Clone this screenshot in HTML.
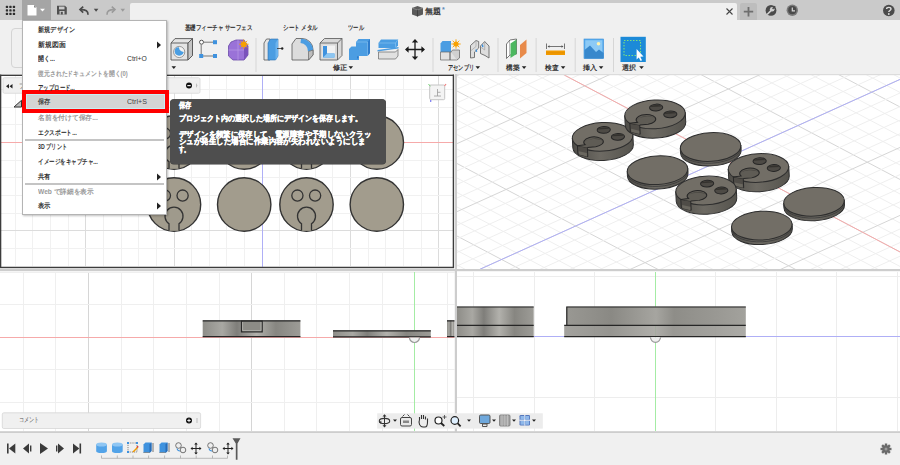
<!DOCTYPE html><html lang="ja"><head><meta charset="utf-8"><title>Fusion</title><style>
*{margin:0;padding:0;box-sizing:border-box}
html,body{width:900px;height:465px;overflow:hidden;background:#f0f0f0;font-family:"Liberation Sans",sans-serif;}
.a{position:absolute}
.t{position:absolute;white-space:nowrap;transform-origin:0 50%}
</style></head><body>
<svg class="a" style="left:0;top:0" width="900" height="465" viewBox="0 0 900 465">
<rect x="0" y="74" width="900" height="358" fill="#ffffff"/>
<clipPath id="c1"><rect x="1" y="76" width="452" height="191"/></clipPath>
<g clip-path="url(#c1)">
<line x1="15.50" y1="76" x2="15.50" y2="268" stroke="#f1f1f1" stroke-width="1"/>
<line x1="32.50" y1="76" x2="32.50" y2="268" stroke="#f1f1f1" stroke-width="1"/>
<line x1="50.50" y1="76" x2="50.50" y2="268" stroke="#f1f1f1" stroke-width="1"/>
<line x1="68.50" y1="76" x2="68.50" y2="268" stroke="#f1f1f1" stroke-width="1"/>
<line x1="85.50" y1="76" x2="85.50" y2="268" stroke="#dcdcdc" stroke-width="1"/>
<line x1="103.50" y1="76" x2="103.50" y2="268" stroke="#f1f1f1" stroke-width="1"/>
<line x1="121.50" y1="76" x2="121.50" y2="268" stroke="#f1f1f1" stroke-width="1"/>
<line x1="138.50" y1="76" x2="138.50" y2="268" stroke="#f1f1f1" stroke-width="1"/>
<line x1="156.50" y1="76" x2="156.50" y2="268" stroke="#f1f1f1" stroke-width="1"/>
<line x1="174.50" y1="76" x2="174.50" y2="268" stroke="#dcdcdc" stroke-width="1"/>
<line x1="191.50" y1="76" x2="191.50" y2="268" stroke="#f1f1f1" stroke-width="1"/>
<line x1="209.50" y1="76" x2="209.50" y2="268" stroke="#f1f1f1" stroke-width="1"/>
<line x1="226.50" y1="76" x2="226.50" y2="268" stroke="#f1f1f1" stroke-width="1"/>
<line x1="244.50" y1="76" x2="244.50" y2="268" stroke="#f1f1f1" stroke-width="1"/>
<line x1="262.50" y1="76" x2="262.50" y2="268" stroke="#dcdcdc" stroke-width="1"/>
<line x1="279.50" y1="76" x2="279.50" y2="268" stroke="#f1f1f1" stroke-width="1"/>
<line x1="297.50" y1="76" x2="297.50" y2="268" stroke="#f1f1f1" stroke-width="1"/>
<line x1="315.50" y1="76" x2="315.50" y2="268" stroke="#f1f1f1" stroke-width="1"/>
<line x1="332.50" y1="76" x2="332.50" y2="268" stroke="#f1f1f1" stroke-width="1"/>
<line x1="350.50" y1="76" x2="350.50" y2="268" stroke="#dcdcdc" stroke-width="1"/>
<line x1="368.50" y1="76" x2="368.50" y2="268" stroke="#f1f1f1" stroke-width="1"/>
<line x1="385.50" y1="76" x2="385.50" y2="268" stroke="#f1f1f1" stroke-width="1"/>
<line x1="403.50" y1="76" x2="403.50" y2="268" stroke="#f1f1f1" stroke-width="1"/>
<line x1="421.50" y1="76" x2="421.50" y2="268" stroke="#f1f1f1" stroke-width="1"/>
<line x1="438.50" y1="76" x2="438.50" y2="268" stroke="#dcdcdc" stroke-width="1"/>
<line x1="0" y1="89.50" x2="454" y2="89.50" stroke="#f1f1f1" stroke-width="1"/>
<line x1="0" y1="107.50" x2="454" y2="107.50" stroke="#f1f1f1" stroke-width="1"/>
<line x1="0" y1="124.50" x2="454" y2="124.50" stroke="#f1f1f1" stroke-width="1"/>
<line x1="0" y1="142.50" x2="454" y2="142.50" stroke="#dcdcdc" stroke-width="1"/>
<line x1="0" y1="160.50" x2="454" y2="160.50" stroke="#f1f1f1" stroke-width="1"/>
<line x1="0" y1="177.50" x2="454" y2="177.50" stroke="#f1f1f1" stroke-width="1"/>
<line x1="0" y1="195.50" x2="454" y2="195.50" stroke="#f1f1f1" stroke-width="1"/>
<line x1="0" y1="213.50" x2="454" y2="213.50" stroke="#f1f1f1" stroke-width="1"/>
<line x1="0" y1="230.50" x2="454" y2="230.50" stroke="#dcdcdc" stroke-width="1"/>
<line x1="0" y1="248.50" x2="454" y2="248.50" stroke="#f1f1f1" stroke-width="1"/>
<line x1="0" y1="266.50" x2="454" y2="266.50" stroke="#f1f1f1" stroke-width="1"/>
<line x1="0" y1="142.5" x2="454" y2="142.5" stroke="#f6aaaa" stroke-width="1"/>
<line x1="262.5" y1="76" x2="262.5" y2="268" stroke="#afaff6" stroke-width="1"/>
<circle cx="174" cy="142.5" r="26.7" fill="#a29c8d" stroke="#333" stroke-width="1.4"/><circle cx="164.9" cy="133.6" r="5.6" fill="#a29c8d" stroke="#333" stroke-width="1.3"/><circle cx="182.6" cy="133.6" r="5.6" fill="#a29c8d" stroke="#333" stroke-width="1.3"/><path d="M169 168.8 L169 161.7 A9 9 0 1 1 179 161.7 L179 168.8" fill="#9f9a8c" stroke="#333" stroke-width="1.3"/>
<circle cx="244.2" cy="142.5" r="26.7" fill="#a29c8d" stroke="#333" stroke-width="1.4"/>
<circle cx="306.5" cy="142.5" r="26.7" fill="#a29c8d" stroke="#333" stroke-width="1.4"/><circle cx="297.4" cy="133.6" r="5.6" fill="#a29c8d" stroke="#333" stroke-width="1.3"/><circle cx="315.1" cy="133.6" r="5.6" fill="#a29c8d" stroke="#333" stroke-width="1.3"/><path d="M301.5 168.8 L301.5 161.7 A9 9 0 1 1 311.5 161.7 L311.5 168.8" fill="#9f9a8c" stroke="#333" stroke-width="1.3"/>
<circle cx="376.8" cy="142.5" r="26.7" fill="#a29c8d" stroke="#333" stroke-width="1.4"/>
<circle cx="174" cy="204.5" r="26.7" fill="#a29c8d" stroke="#333" stroke-width="1.4"/><circle cx="164.9" cy="195.6" r="5.6" fill="#a29c8d" stroke="#333" stroke-width="1.3"/><circle cx="182.6" cy="195.6" r="5.6" fill="#a29c8d" stroke="#333" stroke-width="1.3"/><path d="M169 230.8 L169 223.7 A9 9 0 1 1 179 223.7 L179 230.8" fill="#9f9a8c" stroke="#333" stroke-width="1.3"/>
<circle cx="244.2" cy="204.5" r="26.7" fill="#a29c8d" stroke="#333" stroke-width="1.4"/>
<circle cx="306.5" cy="204.5" r="26.7" fill="#a29c8d" stroke="#333" stroke-width="1.4"/><circle cx="297.4" cy="195.6" r="5.6" fill="#a29c8d" stroke="#333" stroke-width="1.3"/><circle cx="315.1" cy="195.6" r="5.6" fill="#a29c8d" stroke="#333" stroke-width="1.3"/><path d="M301.5 230.8 L301.5 223.7 A9 9 0 1 1 311.5 223.7 L311.5 230.8" fill="#9f9a8c" stroke="#333" stroke-width="1.3"/>
<circle cx="376.8" cy="204.5" r="26.7" fill="#a29c8d" stroke="#333" stroke-width="1.4"/>
</g>
<defs><linearGradient id="gside" x1="0" x2="1" y1="0" y2="0"><stop offset="0" stop-color="#4f4d48"/><stop offset=".45" stop-color="#6d6a63"/><stop offset="1" stop-color="#55534d"/></linearGradient></defs>
<clipPath id="c2"><rect x="457" y="75" width="443" height="194"/></clipPath>
<g clip-path="url(#c2)">
<line x1="457" y1="-184.50" x2="900" y2="48.96" stroke="#efefef" stroke-width="1"/>
<line x1="457" y1="-170.00" x2="900" y2="63.46" stroke="#efefef" stroke-width="1"/>
<line x1="457" y1="-155.50" x2="900" y2="77.96" stroke="#efefef" stroke-width="1"/>
<line x1="457" y1="-141.00" x2="900" y2="92.46" stroke="#efefef" stroke-width="1"/>
<line x1="457" y1="-126.50" x2="900" y2="106.96" stroke="#d6d6d6" stroke-width="1"/>
<line x1="457" y1="-112.00" x2="900" y2="121.46" stroke="#efefef" stroke-width="1"/>
<line x1="457" y1="-97.50" x2="900" y2="135.96" stroke="#efefef" stroke-width="1"/>
<line x1="457" y1="-83.00" x2="900" y2="150.46" stroke="#efefef" stroke-width="1"/>
<line x1="457" y1="-68.50" x2="900" y2="164.96" stroke="#efefef" stroke-width="1"/>
<line x1="457" y1="-54.00" x2="900" y2="179.46" stroke="#d6d6d6" stroke-width="1"/>
<line x1="457" y1="-39.50" x2="900" y2="193.96" stroke="#efefef" stroke-width="1"/>
<line x1="457" y1="-25.00" x2="900" y2="208.46" stroke="#efefef" stroke-width="1"/>
<line x1="457" y1="-10.50" x2="900" y2="222.96" stroke="#efefef" stroke-width="1"/>
<line x1="457" y1="4.00" x2="900" y2="237.46" stroke="#efefef" stroke-width="1"/>
<line x1="457" y1="18.50" x2="900" y2="251.96" stroke="#d6d6d6" stroke-width="1"/>
<line x1="457" y1="33.00" x2="900" y2="266.46" stroke="#efefef" stroke-width="1"/>
<line x1="457" y1="47.50" x2="900" y2="280.96" stroke="#efefef" stroke-width="1"/>
<line x1="457" y1="62.00" x2="900" y2="295.46" stroke="#efefef" stroke-width="1"/>
<line x1="457" y1="76.50" x2="900" y2="309.96" stroke="#efefef" stroke-width="1"/>
<line x1="457" y1="91.00" x2="900" y2="324.46" stroke="#d6d6d6" stroke-width="1"/>
<line x1="457" y1="105.50" x2="900" y2="338.96" stroke="#efefef" stroke-width="1"/>
<line x1="457" y1="120.00" x2="900" y2="353.46" stroke="#efefef" stroke-width="1"/>
<line x1="457" y1="134.50" x2="900" y2="367.96" stroke="#efefef" stroke-width="1"/>
<line x1="457" y1="149.00" x2="900" y2="382.46" stroke="#efefef" stroke-width="1"/>
<line x1="457" y1="163.50" x2="900" y2="396.96" stroke="#d6d6d6" stroke-width="1"/>
<line x1="457" y1="178.00" x2="900" y2="411.46" stroke="#efefef" stroke-width="1"/>
<line x1="457" y1="192.50" x2="900" y2="425.96" stroke="#efefef" stroke-width="1"/>
<line x1="457" y1="207.00" x2="900" y2="440.46" stroke="#efefef" stroke-width="1"/>
<line x1="457" y1="221.50" x2="900" y2="454.96" stroke="#efefef" stroke-width="1"/>
<line x1="457" y1="236.00" x2="900" y2="469.46" stroke="#d6d6d6" stroke-width="1"/>
<line x1="457" y1="250.50" x2="900" y2="483.96" stroke="#efefef" stroke-width="1"/>
<line x1="457" y1="265.00" x2="900" y2="498.46" stroke="#efefef" stroke-width="1"/>
<line x1="457" y1="279.50" x2="900" y2="512.96" stroke="#efefef" stroke-width="1"/>
<line x1="457" y1="294.00" x2="900" y2="527.46" stroke="#efefef" stroke-width="1"/>
<line x1="457" y1="48.44" x2="900" y2="-151.79" stroke="#efefef" stroke-width="1"/>
<line x1="457" y1="62.04" x2="900" y2="-138.19" stroke="#efefef" stroke-width="1"/>
<line x1="457" y1="75.64" x2="900" y2="-124.59" stroke="#d6d6d6" stroke-width="1"/>
<line x1="457" y1="89.24" x2="900" y2="-110.99" stroke="#efefef" stroke-width="1"/>
<line x1="457" y1="102.84" x2="900" y2="-97.39" stroke="#efefef" stroke-width="1"/>
<line x1="457" y1="116.44" x2="900" y2="-83.79" stroke="#efefef" stroke-width="1"/>
<line x1="457" y1="130.04" x2="900" y2="-70.19" stroke="#efefef" stroke-width="1"/>
<line x1="457" y1="143.64" x2="900" y2="-56.59" stroke="#d6d6d6" stroke-width="1"/>
<line x1="457" y1="157.24" x2="900" y2="-42.99" stroke="#efefef" stroke-width="1"/>
<line x1="457" y1="170.84" x2="900" y2="-29.39" stroke="#efefef" stroke-width="1"/>
<line x1="457" y1="184.44" x2="900" y2="-15.79" stroke="#efefef" stroke-width="1"/>
<line x1="457" y1="198.04" x2="900" y2="-2.19" stroke="#efefef" stroke-width="1"/>
<line x1="457" y1="211.64" x2="900" y2="11.41" stroke="#d6d6d6" stroke-width="1"/>
<line x1="457" y1="225.24" x2="900" y2="25.01" stroke="#efefef" stroke-width="1"/>
<line x1="457" y1="238.84" x2="900" y2="38.61" stroke="#efefef" stroke-width="1"/>
<line x1="457" y1="252.44" x2="900" y2="52.21" stroke="#efefef" stroke-width="1"/>
<line x1="457" y1="266.04" x2="900" y2="65.81" stroke="#efefef" stroke-width="1"/>
<line x1="457" y1="279.64" x2="900" y2="79.41" stroke="#d6d6d6" stroke-width="1"/>
<line x1="457" y1="293.24" x2="900" y2="93.01" stroke="#efefef" stroke-width="1"/>
<line x1="457" y1="306.84" x2="900" y2="106.61" stroke="#efefef" stroke-width="1"/>
<line x1="457" y1="320.44" x2="900" y2="120.21" stroke="#efefef" stroke-width="1"/>
<line x1="457" y1="334.04" x2="900" y2="133.81" stroke="#efefef" stroke-width="1"/>
<line x1="457" y1="347.64" x2="900" y2="147.41" stroke="#d6d6d6" stroke-width="1"/>
<line x1="457" y1="361.24" x2="900" y2="161.01" stroke="#efefef" stroke-width="1"/>
<line x1="457" y1="374.84" x2="900" y2="174.61" stroke="#efefef" stroke-width="1"/>
<line x1="457" y1="388.44" x2="900" y2="188.21" stroke="#efefef" stroke-width="1"/>
<line x1="457" y1="402.04" x2="900" y2="201.81" stroke="#efefef" stroke-width="1"/>
<line x1="457" y1="415.64" x2="900" y2="215.41" stroke="#d6d6d6" stroke-width="1"/>
<line x1="457" y1="429.24" x2="900" y2="229.01" stroke="#efefef" stroke-width="1"/>
<line x1="457" y1="442.84" x2="900" y2="242.61" stroke="#efefef" stroke-width="1"/>
<line x1="457" y1="456.44" x2="900" y2="256.21" stroke="#efefef" stroke-width="1"/>
<line x1="457" y1="470.04" x2="900" y2="269.81" stroke="#efefef" stroke-width="1"/>
<line x1="457" y1="483.64" x2="900" y2="283.41" stroke="#d6d6d6" stroke-width="1"/>
<line x1="457" y1="497.24" x2="900" y2="297.01" stroke="#efefef" stroke-width="1"/>
<line x1="564.4" y1="75.1" x2="900" y2="251.96" stroke="#f6aaaa" stroke-width="1"/>
<line x1="480.1" y1="269.2" x2="900" y2="79.41" stroke="#afaff6" stroke-width="1"/>
<g transform="rotate(-3 602.6 136.8)"><path d="M572.3000000000001 136.8 L572.3000000000001 146.20000000000002 A30.3 14.3 0 0 0 632.9 146.20000000000002 L632.9 136.8 Z" fill="url(#gside)" stroke="#2e2e2e" stroke-width="1"/><ellipse cx="602.6" cy="136.8" rx="30.3" ry="14.3" fill="#726e66" stroke="#2e2e2e" stroke-width="1"/><ellipse cx="604.1" cy="130.0" rx="6.6" ry="3.4" fill="#4d4a45" stroke="#262626" stroke-width="1"/><path d="M598.3000000000001 129.2 A6 2.2 0 0 1 609.9 129.2" fill="#34322e"/><ellipse cx="617.9" cy="137.60000000000002" rx="6.6" ry="3.4" fill="#4d4a45" stroke="#262626" stroke-width="1"/><path d="M612.1 136.8 A6 2.2 0 0 1 623.6999999999999 136.8" fill="#34322e"/><path d="M577.0 144.4 L577.0 152.8 L586.8000000000001 155.8 L586.8000000000001 146.60000000000002 Z" fill="#4f4c47" stroke="#262626" stroke-width=".9"/><path d="M578.0 153.20000000000002 L586.0 155.60000000000002 L586.0 152.20000000000002 L578.0 150.00000000000003 Z" fill="#6a675f"/><path d="M577.0 144.4 L584.7 143.8 A9.8 5 0 1 1 595.2 146.3 L586.8000000000001 146.60000000000002" fill="#5f5c55" stroke="#262626" stroke-width="1"/><path d="M583.9000000000001 142.0 A9.6 4.4 0 0 1 602.8000000000001 141.6 A9.3 3.2 0 0 0 583.9000000000001 142.0 Z" fill="#3f3d39"/></g>
<g transform="rotate(-3 655 114.4)"><path d="M624.7 114.4 L624.7 123.80000000000001 A30.3 14.3 0 0 0 685.3 123.80000000000001 L685.3 114.4 Z" fill="url(#gside)" stroke="#2e2e2e" stroke-width="1"/><ellipse cx="655" cy="114.4" rx="30.3" ry="14.3" fill="#726e66" stroke="#2e2e2e" stroke-width="1"/><ellipse cx="656.5" cy="107.60000000000001" rx="6.6" ry="3.4" fill="#4d4a45" stroke="#262626" stroke-width="1"/><path d="M650.7 106.80000000000001 A6 2.2 0 0 1 662.3 106.80000000000001" fill="#34322e"/><ellipse cx="670.3" cy="115.2" rx="6.6" ry="3.4" fill="#4d4a45" stroke="#262626" stroke-width="1"/><path d="M664.5 114.4 A6 2.2 0 0 1 676.0999999999999 114.4" fill="#34322e"/><path d="M629.4 122.0 L629.4 130.4 L639.2 133.4 L639.2 124.2 Z" fill="#4f4c47" stroke="#262626" stroke-width=".9"/><path d="M630.4 130.8 L638.4 133.20000000000002 L638.4 129.8 L630.4 127.60000000000001 Z" fill="#6a675f"/><path d="M629.4 122.0 L637.1 121.4 A9.8 5 0 1 1 647.6 123.9 L639.2 124.2" fill="#5f5c55" stroke="#262626" stroke-width="1"/><path d="M636.3000000000001 119.6 A9.6 4.4 0 0 1 655.2 119.2 A9.3 3.2 0 0 0 636.3000000000001 119.6 Z" fill="#3f3d39"/></g>
<g transform="rotate(-3 710.6 147)"><path d="M680.3000000000001 147 L680.3000000000001 151.6 A30.3 14.3 0 0 0 740.9 151.6 L740.9 147 Z" fill="url(#gside)" stroke="#2e2e2e" stroke-width="1"/><path d="M680.3000000000001 148.9 A30.3 14.3 0 0 0 740.9 148.9" fill="none" stroke="#3a3a3a" stroke-width=".8"/><ellipse cx="710.6" cy="147" rx="30.3" ry="14.3" fill="#726e66" stroke="#2e2e2e" stroke-width="1"/></g>
<g transform="rotate(-3 657.5 170.2)"><path d="M627.2 170.2 L627.2 174.79999999999998 A30.3 14.3 0 0 0 687.8 174.79999999999998 L687.8 170.2 Z" fill="url(#gside)" stroke="#2e2e2e" stroke-width="1"/><path d="M627.2 172.1 A30.3 14.3 0 0 0 687.8 172.1" fill="none" stroke="#3a3a3a" stroke-width=".8"/><ellipse cx="657.5" cy="170.2" rx="30.3" ry="14.3" fill="#726e66" stroke="#2e2e2e" stroke-width="1"/></g>
<g transform="rotate(-3 758.5 168)"><path d="M728.2 168 L728.2 177.4 A30.3 14.3 0 0 0 788.8 177.4 L788.8 168 Z" fill="url(#gside)" stroke="#2e2e2e" stroke-width="1"/><ellipse cx="758.5" cy="168" rx="30.3" ry="14.3" fill="#726e66" stroke="#2e2e2e" stroke-width="1"/><ellipse cx="760.0" cy="161.2" rx="6.6" ry="3.4" fill="#4d4a45" stroke="#262626" stroke-width="1"/><path d="M754.2 160.39999999999998 A6 2.2 0 0 1 765.8 160.39999999999998" fill="#34322e"/><ellipse cx="773.8" cy="168.8" rx="6.6" ry="3.4" fill="#4d4a45" stroke="#262626" stroke-width="1"/><path d="M768.0 168.0 A6 2.2 0 0 1 779.5999999999999 168.0" fill="#34322e"/><path d="M732.9 175.6 L732.9 184.0 L742.7 187.0 L742.7 177.8 Z" fill="#4f4c47" stroke="#262626" stroke-width=".9"/><path d="M733.9 184.4 L741.9 186.8 L741.9 183.4 L733.9 181.20000000000002 Z" fill="#6a675f"/><path d="M732.9 175.6 L740.6 175.0 A9.8 5 0 1 1 751.1 177.5 L742.7 177.8" fill="#5f5c55" stroke="#262626" stroke-width="1"/><path d="M739.8000000000001 173.2 A9.6 4.4 0 0 1 758.7 172.79999999999998 A9.3 3.2 0 0 0 739.8000000000001 173.2 Z" fill="#3f3d39"/></g>
<g transform="rotate(-3 706 190.5)"><path d="M675.7 190.5 L675.7 199.9 A30.3 14.3 0 0 0 736.3 199.9 L736.3 190.5 Z" fill="url(#gside)" stroke="#2e2e2e" stroke-width="1"/><ellipse cx="706" cy="190.5" rx="30.3" ry="14.3" fill="#726e66" stroke="#2e2e2e" stroke-width="1"/><ellipse cx="707.5" cy="183.7" rx="6.6" ry="3.4" fill="#4d4a45" stroke="#262626" stroke-width="1"/><path d="M701.7 182.89999999999998 A6 2.2 0 0 1 713.3 182.89999999999998" fill="#34322e"/><ellipse cx="721.3" cy="191.3" rx="6.6" ry="3.4" fill="#4d4a45" stroke="#262626" stroke-width="1"/><path d="M715.5 190.5 A6 2.2 0 0 1 727.0999999999999 190.5" fill="#34322e"/><path d="M680.4 198.1 L680.4 206.5 L690.2 209.5 L690.2 200.3 Z" fill="#4f4c47" stroke="#262626" stroke-width=".9"/><path d="M681.4 206.9 L689.4 209.3 L689.4 205.9 L681.4 203.70000000000002 Z" fill="#6a675f"/><path d="M680.4 198.1 L688.1 197.5 A9.8 5 0 1 1 698.6 200.0 L690.2 200.3" fill="#5f5c55" stroke="#262626" stroke-width="1"/><path d="M687.3000000000001 195.7 A9.6 4.4 0 0 1 706.2 195.29999999999998 A9.3 3.2 0 0 0 687.3000000000001 195.7 Z" fill="#3f3d39"/></g>
<g transform="rotate(-3 814 201.8)"><path d="M783.7 201.8 L783.7 206.4 A30.3 14.3 0 0 0 844.3 206.4 L844.3 201.8 Z" fill="url(#gside)" stroke="#2e2e2e" stroke-width="1"/><path d="M783.7 203.70000000000002 A30.3 14.3 0 0 0 844.3 203.70000000000002" fill="none" stroke="#3a3a3a" stroke-width=".8"/><ellipse cx="814" cy="201.8" rx="30.3" ry="14.3" fill="#726e66" stroke="#2e2e2e" stroke-width="1"/></g>
<g transform="rotate(-3 761.8 225.6)"><path d="M731.5 225.6 L731.5 230.2 A30.3 14.3 0 0 0 792.0999999999999 230.2 L792.0999999999999 225.6 Z" fill="url(#gside)" stroke="#2e2e2e" stroke-width="1"/><path d="M731.5 227.5 A30.3 14.3 0 0 0 792.0999999999999 227.5" fill="none" stroke="#3a3a3a" stroke-width=".8"/><ellipse cx="761.8" cy="225.6" rx="30.3" ry="14.3" fill="#726e66" stroke="#2e2e2e" stroke-width="1"/></g>
</g>
<clipPath id="c3"><rect x="0" y="271" width="454.5" height="160"/></clipPath>
<g clip-path="url(#c3)">
<line x1="23.50" y1="272" x2="23.50" y2="432" stroke="#efefef" stroke-width="1"/>
<line x1="55.50" y1="272" x2="55.50" y2="432" stroke="#efefef" stroke-width="1"/>
<line x1="88.50" y1="272" x2="88.50" y2="432" stroke="#d6d6d6" stroke-width="1"/>
<line x1="121.50" y1="272" x2="121.50" y2="432" stroke="#efefef" stroke-width="1"/>
<line x1="153.50" y1="272" x2="153.50" y2="432" stroke="#efefef" stroke-width="1"/>
<line x1="186.50" y1="272" x2="186.50" y2="432" stroke="#efefef" stroke-width="1"/>
<line x1="219.50" y1="272" x2="219.50" y2="432" stroke="#efefef" stroke-width="1"/>
<line x1="251.50" y1="272" x2="251.50" y2="432" stroke="#d6d6d6" stroke-width="1"/>
<line x1="284.50" y1="272" x2="284.50" y2="432" stroke="#efefef" stroke-width="1"/>
<line x1="316.50" y1="272" x2="316.50" y2="432" stroke="#efefef" stroke-width="1"/>
<line x1="349.50" y1="272" x2="349.50" y2="432" stroke="#efefef" stroke-width="1"/>
<line x1="382.50" y1="272" x2="382.50" y2="432" stroke="#efefef" stroke-width="1"/>
<line x1="414.50" y1="272" x2="414.50" y2="432" stroke="#d6d6d6" stroke-width="1"/>
<line x1="447.50" y1="272" x2="447.50" y2="432" stroke="#efefef" stroke-width="1"/>
<line x1="0" y1="272.50" x2="455" y2="272.50" stroke="#efefef" stroke-width="1"/>
<line x1="0" y1="304.50" x2="455" y2="304.50" stroke="#efefef" stroke-width="1"/>
<line x1="0" y1="337.50" x2="455" y2="337.50" stroke="#d6d6d6" stroke-width="1"/>
<line x1="0" y1="369.50" x2="455" y2="369.50" stroke="#efefef" stroke-width="1"/>
<line x1="0" y1="402.50" x2="455" y2="402.50" stroke="#efefef" stroke-width="1"/>
<line x1="0" y1="337.5" x2="455" y2="337.5" stroke="#f6aaaa" stroke-width="1"/>
<line x1="414.5" y1="272" x2="414.5" y2="432" stroke="#a4eca4" stroke-width="1"/>
<defs><linearGradient id="gb" x1="0" x2="1" y1="0" y2="0"><stop offset="0" stop-color="#8e8d88"/><stop offset=".2" stop-color="#a9a8a3"/><stop offset=".35" stop-color="#7f7e7a"/><stop offset=".55" stop-color="#b2b1ac"/><stop offset=".75" stop-color="#878681"/><stop offset="1" stop-color="#9d9c97"/></linearGradient><linearGradient id="gb2" x1="0" x2="1" y1="0" y2="0"><stop offset="0" stop-color="#999893"/><stop offset=".25" stop-color="#8a8984"/><stop offset=".5" stop-color="#a6a5a0"/><stop offset=".6" stop-color="#8e8d88"/><stop offset=".85" stop-color="#9a9994"/><stop offset="1" stop-color="#a3a29d"/></linearGradient></defs>
<rect x="202.7" y="320.4" width="97.7" height="16.6" fill="url(#gb)"/>
<path d="M241.5 321 V331.8 H262.2 V321 Z" fill="#8c8b86" stroke="#2a2a2a" stroke-width="1.2"/>
<path d="M242.6 322 V330.6 H261 V322" fill="none" stroke="#b8b7b2" stroke-width=".8"/>
<path d="M202.7 320.8 H300.4 M202.7 336.6 H300.4" stroke="#262626" stroke-width="1.3"/>
<rect x="333" y="330.3" width="97.8" height="6.9" fill="url(#gb)"/>
<path d="M333 330.8 H430.8 M333 336.8 H430.8" stroke="#262626" stroke-width="1.2"/>
<path d="M409.5 337.5 A5 5 0 0 0 419.5 337.5" fill="#f0f0f0" stroke="#999" stroke-width="1.2"/>
<rect x="447" y="320.3" width="10" height="16.7" fill="url(#gb)"/>
<path d="M447 320.8 H457 M447 336.7 H457" stroke="#262626" stroke-width="1.2"/>
</g>
<clipPath id="c4"><rect x="457" y="271" width="443" height="160"/></clipPath>
<g clip-path="url(#c4)">
<line x1="473.50" y1="272" x2="473.50" y2="432" stroke="#ededed" stroke-width="1"/>
<line x1="534.50" y1="272" x2="534.50" y2="432" stroke="#ededed" stroke-width="1"/>
<line x1="594.50" y1="272" x2="594.50" y2="432" stroke="#ededed" stroke-width="1"/>
<line x1="655.50" y1="272" x2="655.50" y2="432" stroke="#ededed" stroke-width="1"/>
<line x1="715.50" y1="272" x2="715.50" y2="432" stroke="#ededed" stroke-width="1"/>
<line x1="776.50" y1="272" x2="776.50" y2="432" stroke="#ededed" stroke-width="1"/>
<line x1="836.50" y1="272" x2="836.50" y2="432" stroke="#ededed" stroke-width="1"/>
<line x1="897.50" y1="272" x2="897.50" y2="432" stroke="#ededed" stroke-width="1"/>
<line x1="457" y1="276.50" x2="900" y2="276.50" stroke="#ededed" stroke-width="1"/>
<line x1="457" y1="336.50" x2="900" y2="336.50" stroke="#ededed" stroke-width="1"/>
<line x1="457" y1="397.50" x2="900" y2="397.50" stroke="#ededed" stroke-width="1"/>
<line x1="457" y1="336.5" x2="900" y2="336.5" stroke="#afaff6" stroke-width="1"/>
<line x1="655.5" y1="272" x2="655.5" y2="432" stroke="#a4eca4" stroke-width="1"/>
<rect x="457" y="306.6" width="76.7" height="30.4" fill="url(#gb)"/>
<path d="M457 307 H533.7 M457 325.4 H533.7 M457 336.7 H533.7" stroke="#262626" stroke-width="1.2"/>
<rect x="566.4" y="306.6" width="179.4" height="18.8" fill="url(#gb2)"/>
<rect x="564.2" y="325.4" width="181.6" height="11.6" fill="url(#gb2)" opacity=".9"/>
<path d="M566.4 307 H745.8 M564.2 325.4 H745.8 M564.2 336.7 H745.8 M566.8 306.6 V325.4" stroke="#262626" stroke-width="1.2"/>
<path d="M650.5 337.3 A5 5 0 0 0 660.5 337.3" fill="#f0f0f0" stroke="#999" stroke-width="1.2"/>
</g>
<rect x="0" y="74.6" width="454" height="1.4" fill="#3c3c3c"/>
<rect x="0" y="74.6" width="1.3" height="193.4" fill="#3c3c3c"/>
<rect x="452.7" y="74.6" width="1.4" height="193.4" fill="#3c3c3c"/>
<rect x="0" y="266.8" width="454" height="1.4" fill="#3c3c3c"/>
<rect x="454.8" y="74" width="2.2" height="358" fill="#cdcdcd"/>
<rect x="0" y="269" width="900" height="2.2" fill="#cdcdcd"/>
<rect x="457" y="74" width="443" height="1.2" fill="#dcdcdc"/>
<rect x="0" y="431.2" width="900" height="2" fill="#cdcdcd"/>
<rect x="3" y="77.7" width="197" height="15.6" rx="1.5" fill="#f0f0f0" stroke="#d8d8d8" stroke-width=".8"/>
<path d="M6 86.2 L9 84 V88.4 Z M9.5 86.2 L12.5 84 V88.4 Z" fill="#222"/>
<circle cx="189" cy="85.6" r="3" fill="#111"/><rect x="187.3" y="85" width="3.4" height="1.2" fill="#eee"/>
<path d="M196 83 L197.5 85.5 L196 88 Z" fill="#bbb"/>
<path d="M14 107 L21.5 100.3 V107 Z" fill="#bdbdbd" stroke="#333" stroke-width="1"/>
<rect x="429.7" y="85" width="15" height="14.7" rx="1.2" fill="#f4f4f4" stroke="#c4c4c4" stroke-width="1"/>
<path d="M434 96 H441 M437.5 89 V96 M437.5 92.3 H440.5" stroke="#999" stroke-width=".8"/>
<path d="M428.5 84 L430.3 86.3" stroke="#7ad07a" stroke-width="1"/><path d="M446 84 L444.5 86" stroke="#f08080" stroke-width="1.2"/><path d="M430.7 100 V102" stroke="#7a7af0" stroke-width="1.2"/>
<rect x="2.3" y="412.8" width="198.3" height="15.7" rx="1.5" fill="#f0f0f0" stroke="#d6d6d6" stroke-width=".8"/>
<circle cx="189" cy="420.5" r="3" fill="#111"/><path d="M187.3 420.5 H190.7 M189 418.8 V422.2" stroke="#eee" stroke-width="1"/>
<path d="M197 418 V423" stroke="#bbb" stroke-width="1"/>
<rect x="377.2" y="413.3" width="165.6" height="15.3" fill="#ececec"/>
<ellipse cx="384.5" cy="421" rx="5.2" ry="2.6" fill="none" stroke="#333" stroke-width="1.1"/>
<path d="M384.5 415 V427" stroke="#333" stroke-width="1"/><path d="M384.5 414.2 L382.5 416.6 H386.5 Z M384.5 427.6 L382.5 425.2 H386.5 Z M379 422.5 L381.3 420.8 V424 Z" fill="#333"/>
<path d="M393 419.5 H397 L395 421.8 Z" fill="#222"/>
<rect x="400.5" y="417.5" width="11" height="8.5" rx="1.5" fill="#e8e8e8" stroke="#444" stroke-width="1"/>
<path d="M402.5 416.5 L404.5 414.5 M409.5 416.5 L407.5 414.5" stroke="#444" stroke-width="1"/><rect x="403" y="420.5" width="6" height="2.5" fill="#888"/>
<path d="M419.5 420 V417 M421.5 419 V415 M423.5 419 V415 M425.5 419.5 V416.5 M419.5 420 C418 423 420 427 423 427 H425 C427 427 427.5 424 427.5 422 V418.5" fill="none" stroke="#333" stroke-width="1.1"/>
<circle cx="438.5" cy="420.5" r="3.5" fill="#fff" stroke="#222" stroke-width="1.2"/><path d="M441 423 L444.3 426" stroke="#222" stroke-width="1.8"/>
<path d="M444.5 415 V419 M442.5 417 H446.5" stroke="#444" stroke-width=".8"/>
<circle cx="454.8" cy="420.5" r="3.8" fill="#dff0ff" stroke="#222" stroke-width="1.2"/><path d="M457.5 423.2 L460.6 426.3" stroke="#222" stroke-width="1.8"/>
<path d="M467 419.5 H471 L469 421.8 Z" fill="#222"/>
<rect x="479.5" y="415" width="10.5" height="8.5" rx="1.2" fill="#6fa8dc" stroke="#555" stroke-width="1"/><path d="M482.5 424 H487 V426.5 H482.5 Z" fill="none" stroke="#555" stroke-width="1"/>
<path d="M492 419.5 H496 L494 421.8 Z" fill="#222"/>
<rect x="499.5" y="415" width="10.5" height="11" rx="1" fill="#a8a8a8" stroke="#777" stroke-width=".8"/><path d="M502 415 V426 M504.8 415 V426 M507.5 415 V426" stroke="#cfcfcf" stroke-width=".6"/>
<path d="M512 419.5 H516 L514 421.8 Z" fill="#222"/>
<rect x="519.5" y="415" width="10.5" height="10.5" rx="1.3" fill="#5577bb"/><path d="M519.5 420.2 H530 M524.8 415 V425.5" stroke="#fff" stroke-width="1"/>
<rect x="520.5" y="416" width="3.8" height="3.7" fill="#8fb8ea"/><rect x="525.3" y="416" width="3.8" height="3.7" fill="#8fb8ea"/><rect x="520.5" y="421" width="3.8" height="3.7" fill="#8fb8ea"/><rect x="525.3" y="421" width="3.8" height="3.7" fill="#8fb8ea"/>
<path d="M532 419.5 H536 L534 421.8 Z" fill="#222"/>
</svg>
<div class="t" id="t1" style="left:18.5px;top:81.00px;font-size:7px;line-height:10px;color:#444;font-weight:normal;transform:scaleX(0.8571);">ブラウザ</div>
<div class="t" id="t2" style="left:18.6px;top:415.30px;font-size:7px;line-height:10px;color:#555;font-weight:normal;transform:scaleX(0.7321);">コメント</div>
<div class="a" style="left:0;top:0;width:900px;height:20.5px;background:#cacaca"></div>
<div class="a" style="left:22px;top:0;width:29px;height:20px;background:#a5a5a5"></div>
<div class="a" style="left:130px;top:3px;width:606.7px;height:17.5px;background:#f0f0f0;border-radius:2px 2px 0 0"></div>
<div class="a" style="left:740px;top:3px;width:17.3px;height:17.5px;background:#bdbdbd;border-radius:2px 2px 0 0"></div>
<div class="a" style="left:0;top:20px;width:900px;height:54px;background:#f0f0f0"></div>
<div class="a" style="left:10.5px;top:28.4px;width:30px;height:39.3px;border:1px solid #d4d4d4;border-radius:4px"></div>
<div class="a" style="left:0;top:433px;width:900px;height:32px;background:#f0f0f0"></div>
<svg class="a" style="left:0;top:0" width="900" height="465" viewBox="0 0 900 465">
<rect x="5.8" y="5.8" width="2.3" height="2.3" rx=".6" fill="#2e2e2e"/>
<rect x="5.8" y="9.3" width="2.3" height="2.3" rx=".6" fill="#2e2e2e"/>
<rect x="5.8" y="12.8" width="2.3" height="2.3" rx=".6" fill="#2e2e2e"/>
<rect x="9.3" y="5.8" width="2.3" height="2.3" rx=".6" fill="#2e2e2e"/>
<rect x="9.3" y="9.3" width="2.3" height="2.3" rx=".6" fill="#2e2e2e"/>
<rect x="9.3" y="12.8" width="2.3" height="2.3" rx=".6" fill="#2e2e2e"/>
<rect x="12.8" y="5.8" width="2.3" height="2.3" rx=".6" fill="#2e2e2e"/>
<rect x="12.8" y="9.3" width="2.3" height="2.3" rx=".6" fill="#2e2e2e"/>
<rect x="12.8" y="12.8" width="2.3" height="2.3" rx=".6" fill="#2e2e2e"/>
<path d="M27.5 5 H34 L36.5 7.5 V15.6 H27.5 Z" fill="#fff"/>
<path d="M34 5 V7.5 H36.5" fill="#888" />
<path d="M40 8.7 H45 L42.5 11.6 Z" fill="#fff"/>
<path d="M57 5.8 H65 L66.8 7.6 V14.5 H57 Z" fill="#505050"/>
<rect x="59" y="6.6" width="5.5" height="2.8" fill="#cacaca"/>
<rect x="59.5" y="11" width="5" height="3.5" fill="#cacaca"/>
<rect x="60.8" y="11.8" width="2" height="2.7" fill="#505050"/>
<path d="M88 14.8 C88.2 11 86 9.6 80.5 9.6" fill="none" stroke="#4a4a4a" stroke-width="1.7"/>
<path d="M83.2 6.6 L80 9.6 L83.2 12.6" fill="none" stroke="#4a4a4a" stroke-width="1.7" stroke-linejoin="miter"/>
<path d="M93.8 8.8 H98.4 L96.1 11.8 Z" fill="#4a4a4a"/>
<path d="M107 14.8 C106.8 11 109 9.6 114.5 9.6" fill="none" stroke="#9a9a9a" stroke-width="1.6"/>
<path d="M111.8 6.6 L115 9.6 L111.8 12.6" fill="none" stroke="#9a9a9a" stroke-width="1.6"/>
<path d="M120.5 8.8 H125 L122.75 11.8 Z" fill="#9a9a9a"/>
<path d="M412 8 L417.5 6 L423 8 V14.5 L417.5 16.5 L412 14.5 Z" fill="#5a5a5a"/>
<path d="M412 8 L417.5 10 L423 8" fill="none" stroke="#8a8a8a" stroke-width=".8"/>
<path d="M417.5 10 V16.5" stroke="#3a3a3a" stroke-width=".8"/>
<path d="M726.5 8.5 L732.5 14.5 M732.5 8.5 L726.5 14.5" stroke="#444" stroke-width="1.1"/>
<path d="M748.5 7 V16.5 M743.8 11.7 H753.2" stroke="#6e6e6e" stroke-width="1.8"/>
<circle cx="771" cy="10.4" r="5.4" fill="#4a4a4a"/>
<path d="M767.6 14 L771 10.6" stroke="#d0d0d0" stroke-width="1.7" stroke-linecap="round"/>
<circle cx="772.2" cy="9.3" r="2.3" fill="#d0d0d0"/>
<path d="M772.6 8.9 L775.2 6.3" stroke="#4a4a4a" stroke-width="1.5"/>
<circle cx="792.3" cy="10.2" r="5.7" fill="#7a7a7a"/><circle cx="792.3" cy="10.2" r="4.1" fill="#4a4a4a"/>
<path d="M792.3 7.6 V10.8 H795" fill="none" stroke="#d8d8d8" stroke-width="1.2"/>
<circle cx="888.8" cy="10.5" r="5.8" fill="#4a4a4a"/>
<path d="M886.6 9 C886.6 6.8 891 6.8 891 9 C891 10.5 888.8 10.5 888.8 12" fill="none" stroke="#ddd" stroke-width="1.4"/>
<circle cx="888.8" cy="14" r=".9" fill="#ddd"/>
<path d="M171 43 L175 38.6 H192.5 V55.5 L188 60 H171 Z" fill="#e4e4e4" stroke="#555" stroke-width=".9"/>
<path d="M171 43 H188 V60 M188 43 L192.5 38.6" fill="none" stroke="#555" stroke-width=".9"/>
<path d="M188 43 L192.5 38.6 V55.5 L188 60 Z" fill="#c4c4c4" stroke="#555" stroke-width=".9"/>
<circle cx="179.2" cy="52" r="5.6" fill="#f2f2f2" stroke="#999" stroke-width="1"/>
<path d="M176.5 47.5 A4.6 4.6 0 1 0 183.8 52 C181 52 179 50 179 47.3 Z" fill="#4a9ee2"/>
<path d="M204 42.2 H213 M201.2 44.5 V54 M202 56 H213" stroke="#777" stroke-width="1"/>
<circle cx="201.5" cy="42.2" r="2" fill="#fff" stroke="#555" stroke-width="1"/>
<rect x="213" y="40.2" width="4" height="4" fill="#3f92de"/>
<rect x="199.2" y="54" width="4" height="4" fill="#3f92de"/>
<rect x="213" y="54" width="4" height="4" fill="#3f92de"/>
<path d="M231 42 L236 40 H244 L248 46 V55 L244 60 H233 L228.5 56 V46 Z" fill="#9a72d8" stroke="#6a4aa8" stroke-width=".8"/>
<path d="M228.5 50 H248 M238 40 V60" stroke="#b99be6" stroke-width=".7"/>
<path d="M244 48 L248 46 V55 L244 60 Z" fill="#7a52bb"/>
<circle cx="243.8" cy="44.2" r="2.8" fill="#f7a100"/>
<path d="M243.8 39.5 V49 M239 44.2 H248.6 M240.4 40.8 L247.2 47.6 M247.2 40.8 L240.4 47.6" stroke="#f7a100" stroke-width=".9"/>
<rect x="255.5" y="38" width="1" height="34" fill="#d6d6d6"/>
<rect x="432.5" y="38" width="1" height="34" fill="#d6d6d6"/>
<rect x="497.5" y="38" width="1" height="34" fill="#d6d6d6"/>
<rect x="535.6" y="38" width="1" height="34" fill="#d6d6d6"/>
<rect x="574.7" y="38" width="1" height="34" fill="#d6d6d6"/>
<rect x="613" y="38" width="1" height="34" fill="#d6d6d6"/>
<path d="M264 43 L266.5 39 H270 V60 H264 Z" fill="#e6e6e6" stroke="#555" stroke-width=".8"/>
<path d="M268 43 L270.5 39 H278 V56 L275.5 60 H268 Z" fill="#4b9de2" stroke="#2d6fb0" stroke-width=".6"/>
<path d="M275.5 43 L278 39 V56 L275.5 60 Z" fill="#6bb3ee"/>
<path d="M277 48.5 H282" stroke="#444" stroke-width=".9"/><circle cx="282.2" cy="48.5" r="1.2" fill="#222"/>
<path d="M292 44 L296 38.5 H302 A11 11 0 0 1 313 49.5 V55 L308.5 60 H292 Z" fill="#dcdcdc" stroke="#555" stroke-width=".8"/>
<path d="M301 38.8 A11.5 11.5 0 0 1 313 50 L308 51.5 A8 8 0 0 0 300.5 43 Z" fill="#4b9de2"/>
<path d="M308.5 51.5 V60 L313 55 V50 Z" fill="#bdbdbd" stroke="#555" stroke-width=".6"/>
<path d="M320 43 L324.5 38.5 H342 V55.5 L337.5 60 H320 Z" fill="#d9d9d9" stroke="#555" stroke-width=".8"/>
<path d="M320 43 H337.5 V60 M337.5 43 L342 38.5" fill="none" stroke="#555" stroke-width=".8"/>
<rect x="322.5" y="45.5" width="12.5" height="12" fill="#f2f2f2"/>
<path d="M323 46 H327 V53.5 H334.5 V57.5 H323 Z" fill="#3f92de"/>
<path d="M327 53.5 H334.5 V57.5 H323 Z" fill="#8cc6f2"/>
<path d="M349 49 L351.5 46.5 H359 V60 H349 Z" fill="#4b9de2"/>
<path d="M356 42 L358.5 39 H370 V53 L367.5 56 H356 Z" fill="#4b9de2"/>
<path d="M367.5 42 L370 39 V53 L367.5 56 Z" fill="#2e7ccc"/>
<path d="M356 42 H367.5 V56" fill="none" stroke="#8ec8f4" stroke-width=".6"/>
<path d="M357 56 V59 L359 57 Z" fill="#2e7ccc"/>
<path d="M378.5 43 L381 39.5 H398 V45.5 L395.5 48 H378.5 Z" fill="#4b9de2"/>
<path d="M378.5 43 H395.5 V48 M395.5 43 L398 39.5" fill="none" stroke="#8ec8f4" stroke-width=".6"/>
<path d="M377.5 50 L398.5 47 V48.5 L377.5 51.5 Z" fill="#4b9de2"/>
<path d="M378.5 52 H395.5 L398 49.5 V56 L395.5 59 H378.5 Z" fill="#e0e0e0" stroke="#666" stroke-width=".7"/>
<path d="M415 41 V58 M406.5 49.5 H423.5" stroke="#1a1a1a" stroke-width="1.3"/>
<path d="M415 39 L411.8 42.6 H418.2 Z M415 60 L411.8 56.4 H418.2 Z M405 49.5 L408.6 46.3 V52.7 Z M425 49.5 L421.4 46.3 V52.7 Z" fill="#1a1a1a"/>
<path d="M440.5 43.5 L442.5 41 H451 V52 H440.5 Z" fill="#4b9de2"/>
<path d="M440.5 52 H450 V60 H440.5 Z M450 52 H459 V58 L457 60 H450 Z" fill="#e2e2e2" stroke="#666" stroke-width=".7"/>
<path d="M451 52 L452.5 50 H459.5 V58 L457 60" fill="#d0d0d0" stroke="#666" stroke-width=".7"/>
<circle cx="456" cy="44" r="2.6" fill="#f7a100"/>
<path d="M456 39.3 V48.7 M451.3 44 H460.7 M452.7 40.7 L459.3 47.3 M459.3 40.7 L452.7 47.3" stroke="#f7a100" stroke-width=".9"/>
<path d="M470.5 45.5 L476 40.5 L478.7 41.5 V48 L474.5 52 V57.5 L470.5 58 Z" fill="#dedede" stroke="#6a6a6a" stroke-width=".9" stroke-linejoin="round"/>
<path d="M476 40.5 V46.5 L470.5 51" fill="none" stroke="#9a9a9a" stroke-width=".6"/>
<path d="M480.5 46 L484.7 41.5 L489 46 V58 L485 55.5 L480.5 53.5 Z" fill="#dedede" stroke="#6a6a6a" stroke-width=".9" stroke-linejoin="round"/>
<path d="M484.7 41.5 V50 L480.5 47" fill="none" stroke="#9a9a9a" stroke-width=".6"/>
<path d="M476.2 49.5 L476.6 51.8 M482.4 44.5 L482.8 47.2" stroke="#3f92de" stroke-width="1.4"/>
<path d="M506.5 44 L510 40 V55 L506.5 58.5 Z" fill="#fff" stroke="#555" stroke-width=".8"/>
<path d="M510 40 L516.5 39 V54 L510 55" fill="#fff" stroke="#555" stroke-width=".8"/>
<path d="M510.5 43.5 L516.5 39.5 V54 L510.5 58 Z" fill="#4cb860"/>
<path d="M520 45 L526.5 39.5 V53 L520 58.5 Z" fill="#e88a4a"/>
<path d="M546.5 43.5 V49 M564.5 43.5 V49" stroke="#555" stroke-width=".8"/>
<path d="M548 46.5 H563" stroke="#555" stroke-width=".8"/>
<path d="M547.5 46.5 L549.5 45.2 V47.8 Z M563.5 46.5 L561.5 45.2 V47.8 Z" fill="#555"/>
<rect x="546" y="50.5" width="19" height="4.5" fill="#f29a00"/>
<path d="M546.5 52.8 H565" stroke="#c57800" stroke-width=".6" stroke-dasharray="1 1"/>
<rect x="584" y="39" width="19.6" height="19.4" fill="#5aaef0" stroke="#3a8ed8" stroke-width=".6"/>
<rect x="585.3" y="40.3" width="17" height="16.8" fill="#8ccaf6"/>
<path d="M584.5 58.4 V50 L590 45.5 L596 52 L599 49.5 L603.6 53 V58.4 Z" fill="#3888cc"/>
<circle cx="598.5" cy="43.8" r="1.8" fill="#fff3b0"/>
<rect x="620.5" y="36.8" width="25.3" height="25.2" fill="#1c8ad8"/>
<rect x="624" y="40.5" width="16.5" height="15" fill="none" stroke="#7ee07e" stroke-width="1.1" stroke-dasharray="1.5 1.5"/>
<path d="M636.6 49 V59.5 L638.8 57.4 L640.6 61 L642 60.3 L640.3 56.8 L643.5 56.6 Z" fill="#fff"/>
<path d="M171.5 66.3 H176.1 L173.8 69 Z" fill="#222"/>
<path d="M348.5 66.3 H353.1 L350.8 69 Z" fill="#222"/>
<path d="M475.5 66.3 H480.1 L477.8 69 Z" fill="#222"/>
<path d="M521.8 66.3 H526.4 L524.0999999999999 69 Z" fill="#222"/>
<path d="M560.8 66.3 H565.4 L563.0999999999999 69 Z" fill="#222"/>
<path d="M598.8 66.3 H603.4 L601.0999999999999 69 Z" fill="#222"/>
<path d="M639.2 66.3 H643.8000000000001 L641.5 69 Z" fill="#222"/>
<rect x="7" y="443.5" width="1.6" height="10" fill="#3a3a3a"/><path d="M15.3 443.5 V453.5 L9 448.5 Z" fill="#3a3a3a"/>
<path d="M29 443.5 V453.5 L23 448.5 Z" fill="#3a3a3a"/><rect x="30" y="445.5" width="1.4" height="6" fill="#3a3a3a"/>
<path d="M40 443 V454 L48 448.5 Z" fill="#3a3a3a"/>
<rect x="56" y="445.5" width="1.4" height="6" fill="#3a3a3a"/><path d="M58 443.5 V453.5 L64 448.5 Z" fill="#3a3a3a"/>
<path d="M73 443.5 V453.5 L79.3 448.5 Z" fill="#3a3a3a"/><rect x="79.5" y="443.5" width="1.6" height="10" fill="#3a3a3a"/>
<path d="M96.2 444.5 V451 A5.35 2 0 0 0 106.9 451 V444.5 Z" fill="#52a3e8"/><ellipse cx="101.55" cy="444.5" rx="5.35" ry="2" fill="#8fc6f3"/>
<path d="M112 444.5 V451 A5.35 2 0 0 0 122.7 451 V444.5 Z" fill="#52a3e8"/><ellipse cx="117.35" cy="444.5" rx="5.35" ry="2" fill="#8fc6f3"/>
<rect x="128" y="443" width="9" height="9" fill="none" stroke="#555" stroke-width=".7" stroke-dasharray="1.2 1"/>
<rect x="127" y="442" width="2" height="2" fill="#3f92de"/><rect x="136" y="442" width="2" height="2" fill="#3f92de"/><rect x="127" y="451" width="2" height="2" fill="#3f92de"/>
<path d="M133 452 L137.5 447.5" stroke="#f29a00" stroke-width="1.5"/><circle cx="137.6" cy="446.8" r=".9" fill="#e03030"/>
<path d="M143.5 444.5 L145.5 442.5 H151.5 V451 L149.5 453 H143.5 Z" fill="#3f92de"/><path d="M149.5 444.5 L151.5 442.5 V451 L149.5 453 Z" fill="#2a6cb6"/>
<path d="M153.0 443 V452" stroke="#555" stroke-width=".8"/><path d="M143.5 452.5 H149.5" stroke="#888" stroke-width=".8"/>
<path d="M159.5 444.5 L161.5 442.5 H167.5 V451 L165.5 453 H159.5 Z" fill="#3f92de"/><path d="M165.5 444.5 L167.5 442.5 V451 L165.5 453 Z" fill="#2a6cb6"/>
<path d="M169.0 443 V452" stroke="#555" stroke-width=".8"/><path d="M159.5 452.5 H165.5" stroke="#888" stroke-width=".8"/>
<circle cx="178.5" cy="445.5" r="2.8" fill="#eee" stroke="#555" stroke-width=".8"/><circle cx="183.0" cy="450" r="2.8" fill="#eee" stroke="#555" stroke-width=".8"/>
<path d="M177.0 448.5 Q177.5 451 180.0 451" fill="none" stroke="#3f92de" stroke-width="1.1"/>
<circle cx="210.5" cy="445.5" r="2.8" fill="#eee" stroke="#555" stroke-width=".8"/><circle cx="215.0" cy="450" r="2.8" fill="#eee" stroke="#555" stroke-width=".8"/>
<path d="M209.0 448.5 Q209.5 451 212.0 451" fill="none" stroke="#3f92de" stroke-width="1.1"/>
<path d="M196 443.5 V453.5 M191 448.5 H201" stroke="#222" stroke-width="1"/><path d="M196 442.5 L194.2 444.6 H197.8 Z M196 454.5 L194.2 452.4 H197.8 Z M190.5 448.5 L192.6 446.7 V450.3 Z M201.5 448.5 L199.4 446.7 V450.3 Z" fill="#222"/>
<path d="M228 443.5 V453.5 M223 448.5 H233" stroke="#222" stroke-width="1"/><path d="M228 442.5 L226.2 444.6 H229.8 Z M228 454.5 L226.2 452.4 H229.8 Z M222.5 448.5 L224.6 446.7 V450.3 Z M233.5 448.5 L231.4 446.7 V450.3 Z" fill="#222"/>
<path d="M232.5 438.3 H240.5 L237.5 443.5 V459.8 H235.8 V443.5 Z" fill="#5a5a5a"/>
<path d="M101.5 455.5 V458.3 H227.5 V455.5" fill="none" stroke="#aaa" stroke-width=".8"/>
<path d="M117.3 455.5 V458.3" stroke="#aaa" stroke-width=".8"/>
<path d="M133 455.5 V458.3" stroke="#aaa" stroke-width=".8"/>
<path d="M148.6 455.5 V458.3" stroke="#aaa" stroke-width=".8"/>
<path d="M164.6 455.5 V458.3" stroke="#aaa" stroke-width=".8"/>
<path d="M180.5 455.5 V458.3" stroke="#aaa" stroke-width=".8"/>
<path d="M196.2 455.5 V458.3" stroke="#aaa" stroke-width=".8"/>
<path d="M212.5 455.5 V458.3" stroke="#aaa" stroke-width=".8"/>
<g transform="translate(886 449)">
<rect x="-1.2" y="-5.5" width="2.4" height="3" fill="#6a6a6a" transform="rotate(0)"/>
<rect x="-1.2" y="-5.5" width="2.4" height="3" fill="#6a6a6a" transform="rotate(45)"/>
<rect x="-1.2" y="-5.5" width="2.4" height="3" fill="#6a6a6a" transform="rotate(90)"/>
<rect x="-1.2" y="-5.5" width="2.4" height="3" fill="#6a6a6a" transform="rotate(135)"/>
<rect x="-1.2" y="-5.5" width="2.4" height="3" fill="#6a6a6a" transform="rotate(180)"/>
<rect x="-1.2" y="-5.5" width="2.4" height="3" fill="#6a6a6a" transform="rotate(225)"/>
<rect x="-1.2" y="-5.5" width="2.4" height="3" fill="#6a6a6a" transform="rotate(270)"/>
<rect x="-1.2" y="-5.5" width="2.4" height="3" fill="#6a6a6a" transform="rotate(315)"/>
<circle r="3.8" fill="#6a6a6a"/><circle r="1.5" fill="#9a9a9a"/></g>
</svg>
<div class="t" id="t3" style="left:425px;top:7.30px;font-size:8px;line-height:10px;color:#333;font-weight:bold;transform:scaleX(1.0000);">無題</div>
<div class="t" id="t4" style="left:442px;top:5.00px;font-size:7px;line-height:10px;color:#5a8ab8;font-weight:bold;transform:scaleX(1.0000);">*</div>
<div class="t" id="t5" style="left:185.3px;top:22.70px;font-size:7px;line-height:10px;color:#333;font-weight:bold;transform:scaleX(0.7849);">基礎フィーチャ サーフェス</div>
<div class="t" id="t6" style="left:283.4px;top:22.70px;font-size:7px;line-height:10px;color:#333;font-weight:bold;transform:scaleX(0.7909);">シート メタル</div>
<div class="t" id="t7" style="left:347.7px;top:22.70px;font-size:7px;line-height:10px;color:#333;font-weight:bold;transform:scaleX(0.7524);">ツール</div>
<div class="t" id="t8" style="left:332.5px;top:62.70px;font-size:7px;line-height:10px;color:#333;font-weight:bold;transform:scaleX(1.0357);">修正</div>
<div class="t" id="t9" style="left:448px;top:62.70px;font-size:7px;line-height:10px;color:#333;font-weight:bold;transform:scaleX(0.7429);">アセンブリ</div>
<div class="t" id="t10" style="left:505.6px;top:62.70px;font-size:7px;line-height:10px;color:#333;font-weight:bold;transform:scaleX(0.9571);">構築</div>
<div class="t" id="t11" style="left:544.5px;top:62.70px;font-size:7px;line-height:10px;color:#333;font-weight:bold;transform:scaleX(0.9643);">検査</div>
<div class="t" id="t12" style="left:583px;top:62.70px;font-size:7px;line-height:10px;color:#333;font-weight:bold;transform:scaleX(1.0000);">挿入</div>
<div class="t" id="t13" style="left:622.4px;top:62.70px;font-size:7px;line-height:10px;color:#333;font-weight:bold;transform:scaleX(1.0071);">選択</div>
<div class="a" style="left:22px;top:20px;width:145px;height:195px;background:#fff;border:1px solid #b4b4b4;box-shadow:1px 1px 2px rgba(0,0,0,.25)"></div>
<div class="a" style="left:22px;top:90.3px;width:146.8px;height:23.1px;border:4px solid #ff0000;background:#d4d4d4"></div>
<div class="a" style="left:26px;top:94.3px;width:138.8px;height:15.1px;border:1px solid #c8eef4"></div>
<div class="t" id="t14" style="left:38px;top:25.00px;font-size:7px;line-height:10px;color:#333;font-weight:bold;transform:scaleX(0.8810);">新規デザイン</div>
<div class="t" id="t15" style="left:38px;top:39.70px;font-size:7px;line-height:10px;color:#333;font-weight:bold;transform:scaleX(0.9857);">新規図面</div>
<svg class="a" style="left:156px;top:40.7px" width="6" height="8"><path d="M1 0.5L5 4L1 7.5z" fill="#222"/></svg>
<div class="t" id="t16" style="left:38px;top:54.30px;font-size:7px;line-height:10px;color:#333;font-weight:bold;transform:scaleX(0.8500);">開く...</div>
<div class="t" id="t17" style="left:127px;top:54.30px;font-size:8px;line-height:10px;color:#333;font-weight:normal;transform:scaleX(0.8478);">Ctrl+O</div>
<div class="t" id="t18" style="left:38px;top:69.00px;font-size:7px;line-height:10px;color:#9a9a9a;font-weight:bold;transform:scaleX(0.8411);">復元されたドキュメントを開く(0)</div>
<div class="t" id="t19" style="left:38px;top:82.70px;font-size:7px;line-height:10px;color:#333;font-weight:bold;transform:scaleX(0.7708);">アップロード...</div>
<div class="t" id="t20" style="left:38px;top:97.30px;font-size:7px;line-height:10px;color:#444;font-weight:bold;transform:scaleX(0.8929);">保存</div>
<div class="t" id="t21" style="left:127px;top:97.30px;font-size:8px;line-height:10px;color:#444;font-weight:normal;transform:scaleX(0.8864);">Ctrl+S</div>
<div class="t" id="t22" style="left:38px;top:113.30px;font-size:7px;line-height:10px;color:#9a9a9a;font-weight:bold;transform:scaleX(0.9677);">名前を付けて保存...</div>
<div class="t" id="t23" style="left:38px;top:128.00px;font-size:7px;line-height:10px;color:#333;font-weight:bold;transform:scaleX(0.8125);">エクスポート...</div>
<div class="t" id="t24" style="left:38px;top:142.40px;font-size:7px;line-height:10px;color:#333;font-weight:bold;transform:scaleX(0.7436);">3D プリント</div>
<div class="t" id="t25" style="left:38px;top:157.00px;font-size:7px;line-height:10px;color:#333;font-weight:bold;transform:scaleX(0.7895);">イメージをキャプチャ...</div>
<div class="t" id="t26" style="left:38px;top:171.70px;font-size:7px;line-height:10px;color:#333;font-weight:bold;transform:scaleX(0.8929);">共有</div>
<svg class="a" style="left:156px;top:172.7px" width="6" height="8"><path d="M1 0.5L5 4L1 7.5z" fill="#222"/></svg>
<div class="t" id="t27" style="left:38px;top:186.70px;font-size:7px;line-height:10px;color:#9a9a9a;font-weight:bold;transform:scaleX(0.9492);">Web で詳細を表示</div>
<div class="t" id="t28" style="left:38px;top:201.30px;font-size:7px;line-height:10px;color:#333;font-weight:bold;transform:scaleX(0.8929);">表示</div>
<svg class="a" style="left:156px;top:202.3px" width="6" height="8"><path d="M1 0.5L5 4L1 7.5z" fill="#222"/></svg>
<div class="a" style="left:25px;top:139.2px;width:139px;height:2px;background:#c4c4c4"></div>
<div class="a" style="left:25px;top:183.2px;width:139px;height:2px;background:#c4c4c4"></div>
<div class="a" style="left:170px;top:99.3px;width:216px;height:64.3px;background:#4e4e4e;border-radius:4px;box-shadow:0 .5px 0 #3a3a3a"></div>
<div class="t" id="t29" style="left:179px;top:100.70px;font-size:8px;line-height:9px;color:#fff;font-weight:bold;transform:scaleX(0.7812);-webkit-text-stroke:.3px #fff;">保存</div>
<div class="t" id="t30" style="left:179px;top:114.00px;font-size:8px;line-height:9px;color:#fff;font-weight:bold;transform:scaleX(0.8779);-webkit-text-stroke:.3px #fff;">プロジェクト内の選択した場所にデザインを保存します。</div>
<div class="t" id="t31" style="left:179px;top:129.50px;font-size:8px;line-height:9px;color:#fff;font-weight:bold;transform:scaleX(0.9231);-webkit-text-stroke:.3px #fff;">デザインを頻繁に保存して、電源障害や予期しないクラッ</div>
<div class="t" id="t32" style="left:179px;top:137.00px;font-size:8px;line-height:9px;color:#fff;font-weight:bold;transform:scaleX(0.9330);-webkit-text-stroke:.3px #fff;">シュが発生した場合に作業内容が失われないようにしま</div>
<div class="t" id="t33" style="left:179px;top:145.00px;font-size:8px;line-height:9px;color:#fff;font-weight:bold;transform:scaleX(0.6562);-webkit-text-stroke:.3px #fff;">す。</div>
</body></html>
